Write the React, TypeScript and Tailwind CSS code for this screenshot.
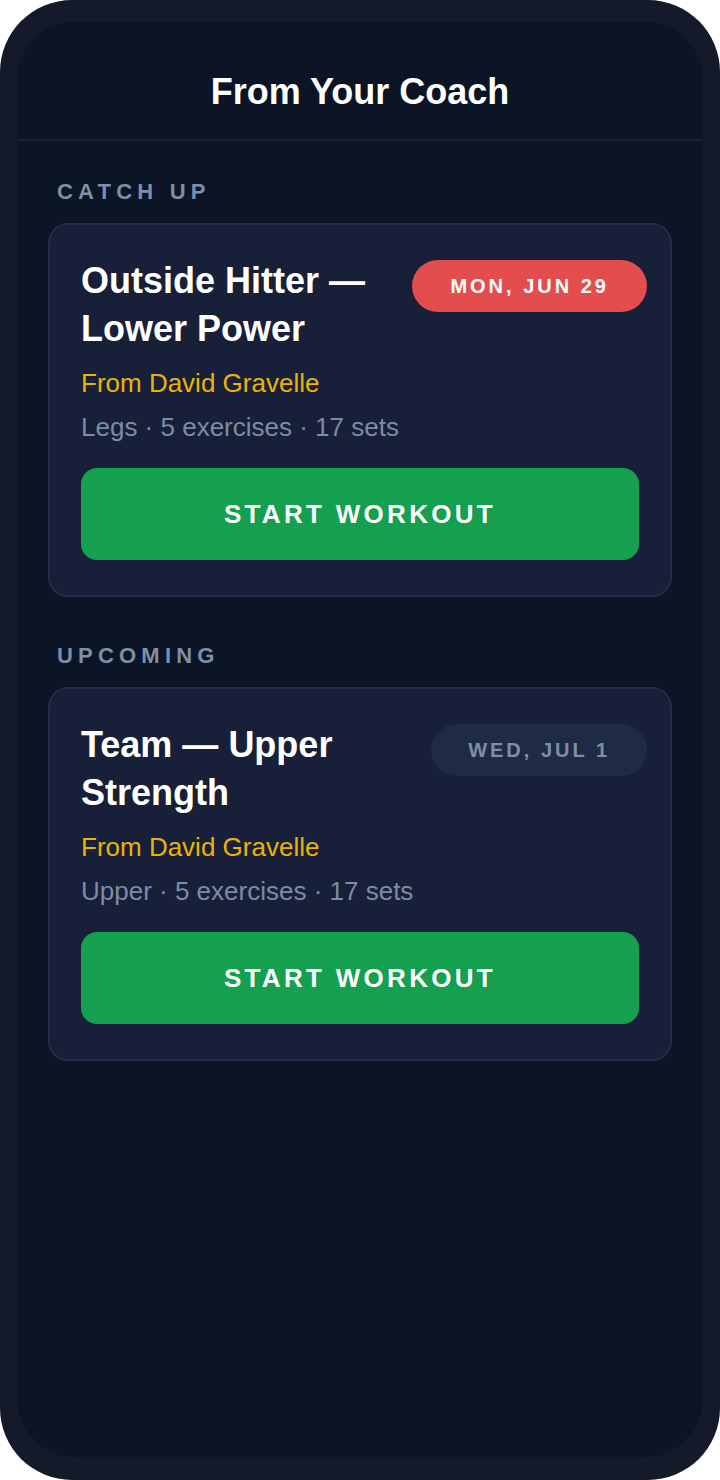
import React from "react";

const font = { fontFamily: '"Liberation Sans", Arial, sans-serif' };

function Card({
  title,
  date,
  urgent,
  meta,
}: {
  title: React.ReactNode;
  date: string;
  urgent: boolean;
  meta: string;
}) {
  return (
    <div className="mx-[30px] rounded-[20px] border-2 border-[#222c45] bg-[#172038] px-[31px] pt-[32px] pb-[35px]">
      <div className="flex items-start justify-between gap-4">
        <h2 className="text-[36px] font-bold leading-[48px] text-white">{title}</h2>
        <span
          className={
            urgent
              ? "mt-[3px] mr-[-8px] flex h-[52px] shrink-0 items-center rounded-full bg-[#e34d4d] px-[38px] text-[20px] font-bold tracking-[3px] text-white"
              : "mt-[3px] mr-[-8px] flex h-[52px] shrink-0 items-center rounded-full bg-[#1f2b45] px-[37px] text-[20px] font-bold tracking-[3px] text-[#7f8ea6]"
          }
        >
          {date}
        </span>
      </div>
      <div className="mt-[13px] text-[26px] leading-[34px] text-[#eab308]">From David Gravelle</div>
      <div className="mt-[10px] text-[26px] leading-[34px] text-[#7d8ca4]">{meta}</div>
      <button className="mt-[24px] flex h-[92px] w-full items-center justify-center rounded-[16px] bg-[#15a04f] text-[26px] font-bold tracking-[3.3px] text-white">
        START WORKOUT
      </button>
    </div>
  );
}

export default function App() {
  return (
    <div style={font} className="h-[1480px] w-[720px] bg-white">
      <div className="flex h-full flex-col rounded-[72px] bg-[#151a2b] px-[18px] pt-[22px] pb-[23px]">
        <div className="flex flex-1 flex-col overflow-hidden rounded-[56px] bg-[#0b1526]">
          <div className="border-b-2 border-[#1a2438] pt-[50px] pb-[27px] text-center text-[36px] font-bold leading-[40px] text-white">
            From Your Coach
          </div>
          <div className="mt-[37px] px-[39px] text-[22px] font-bold leading-[28px] tracking-[5.2px] text-[#7f8fa6]">
            CATCH UP
          </div>
          <div className="mt-[17px]">
            <Card
              title={
                <>
                  Outside Hitter —
                  <br />
                  Lower Power
                </>
              }
              date="MON, JUN 29"
              urgent
              meta="Legs · 5 exercises · 17 sets"
            />
          </div>
          <div className="mt-[45px] px-[39px] text-[22px] font-bold leading-[28px] tracking-[5.2px] text-[#7f8fa6]">
            UPCOMING
          </div>
          <div className="mt-[17px]">
            <Card
              title={
                <>
                  Team — Upper
                  <br />
                  Strength
                </>
              }
              date="WED, JUL 1"
              urgent={false}
              meta="Upper · 5 exercises · 17 sets"
            />
          </div>
        </div>
      </div>
    </div>
  );
}
